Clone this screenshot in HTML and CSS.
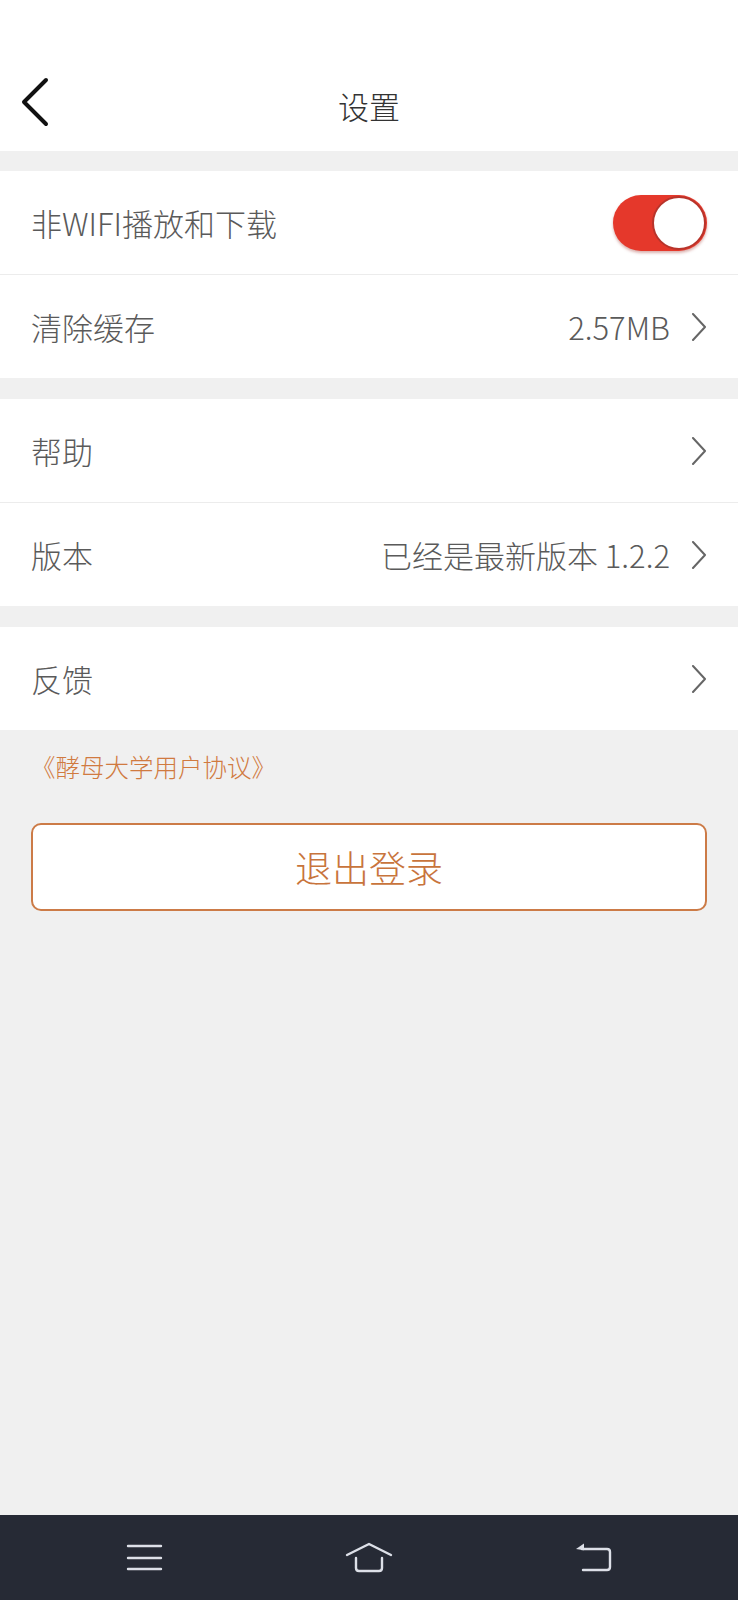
FILE: index.html
```html
<!DOCTYPE html>
<html lang="zh-CN">
<head>
    <meta charset="UTF-8">
    <meta name="viewport" content="width=device-width, initial-scale=1.0">
    <title>设置</title>
    <link rel="stylesheet" href="styles.css">
</head>
<body>
    <div class="page">
        <header class="top-bar">
            <div class="back-btn">
                <svg width="30" height="50" viewBox="0 0 30 50">
                    <path d="M26 3 L4 25 L26 47" fill="none" stroke="#111" stroke-width="4" stroke-linecap="round" stroke-linejoin="round"/>
                </svg>
            </div>
            <h1 class="title">设置</h1>
            <div></div>
        </header>

        <section class="group">
            <div class="row">
                <span class="label">非WIFI播放和下载</span>
                <div class="switch on"><div class="knob"></div></div>
            </div>
            <div class="row">
                <span class="label">清除缓存</span>
                <div class="right">
                    <span class="value">2.57MB</span>
                    <svg class="arrow" width="16" height="28" viewBox="0 0 16 28"><path d="M2 1 L14 14 L2 27" fill="none" stroke="#666" stroke-width="2" stroke-linecap="round" stroke-linejoin="round"/></svg>
                </div>
            </div>
        </section>

        <section class="group">
            <div class="row">
                <span class="label">帮助</span>
                <div class="right">
                    <svg class="arrow" width="16" height="28" viewBox="0 0 16 28"><path d="M2 1 L14 14 L2 27" fill="none" stroke="#666" stroke-width="2" stroke-linecap="round" stroke-linejoin="round"/></svg>
                </div>
            </div>
            <div class="row">
                <span class="label">版本</span>
                <div class="right">
                    <span class="value">已经是最新版本 1.2.2</span>
                    <svg class="arrow" width="16" height="28" viewBox="0 0 16 28"><path d="M2 1 L14 14 L2 27" fill="none" stroke="#666" stroke-width="2" stroke-linecap="round" stroke-linejoin="round"/></svg>
                </div>
            </div>
        </section>

        <section class="group">
            <div class="row">
                <span class="label">反馈</span>
                <div class="right">
                    <svg class="arrow" width="16" height="28" viewBox="0 0 16 28"><path d="M2 1 L14 14 L2 27" fill="none" stroke="#666" stroke-width="2" stroke-linecap="round" stroke-linejoin="round"/></svg>
                </div>
            </div>
        </section>

        <a class="agreement">《酵母大学用户协议》</a>

        <button class="logout">退出登录</button>

        <nav class="sys-bar">
            <svg width="50" height="40" viewBox="0 0 50 40">
                <path d="M9 8 H42 M9 20 H42 M9 31 H42" stroke="#dde0e8" stroke-width="2.4" stroke-linecap="round"/>
            </svg>
            <svg width="50" height="40" viewBox="0 0 50 40">
                <path d="M3 17 L25 6 L47 17" fill="none" stroke="#dde0e8" stroke-width="2.4" stroke-linecap="round" stroke-linejoin="round"/>
                <path d="M12 20 V30 Q12 33 15 33 H35 Q38 33 38 30 V20" fill="none" stroke="#dde0e8" stroke-width="2.4" stroke-linecap="round"/>
            </svg>
            <svg width="50" height="40" viewBox="0 0 50 40">
                <path d="M13 11 H38 Q41 11 41 14 V29 Q41 32 38 32 H14" fill="none" stroke="#dde0e8" stroke-width="2.4" stroke-linecap="round"/>
                <polygon points="7,11 15,5.5 15,12.2" fill="#dde0e8"/>
            </svg>
        </nav>
    </div>
</body>
</html>
```

FILE: styles.css
```css
body {
    margin: 0;
    padding: 0;
    background: #f0f0f0;
    font-family: "Noto Sans CJK SC", "Noto Sans", sans-serif;
    font-weight: 300;
}
.page {
    display: flex;
    flex-direction: column;
    min-height: 100vh;
}
.top-bar {
    background: #fff;
    height: 91px;
    padding-top: 60px;
    display: grid;
    grid-template-columns: 80px 1fr 80px;
    align-items: center;
}
.back-btn {
    padding-left: 20px;
    height: 50px;
    margin-bottom: 8px;
}
.title {
    margin: 0;
    text-align: center;
    font-size: 31px;
    font-weight: 300;
    color: #333;
}
.group {
    background: #fff;
    margin-top: 21px;
}
.group:first-of-type {
    margin-top: 20px;
}
.row {
    height: 103px;
    display: flex;
    justify-content: space-between;
    align-items: center;
    padding: 0 31px;
}
.row + .row {
    border-top: 1px solid #ececec;
}
.label {
    font-size: 31px;
    color: #5a5a5a;
}
.right {
    display: flex;
    align-items: center;
    gap: 21px;
}
.value {
    font-size: 31px;
    color: #5a5a5a;
}
.arrow {
    display: block;
}
.switch {
    width: 94px;
    height: 56px;
    border-radius: 28px;
    background: #e5382b;
    display: flex;
    justify-content: flex-end;
    align-items: center;
    padding: 0 1px;
    box-sizing: border-box;
    box-shadow: 0 2px 3px rgba(150, 30, 20, 0.35);
}
.knob {
    width: 50px;
    height: 50px;
    border-radius: 50%;
    background: #fff;
    border: 2px solid #b8342b;
}
.agreement {
    margin: 20px 0 0 31px;
    font-size: 24.5px;
    line-height: 34px;
    color: #d07a40;
}
.logout {
    margin: 39px 31px 0;
    height: 88px;
    background: #fff;
    border: 2px solid #cc7b47;
    border-radius: 10px;
    font-family: "Noto Sans CJK SC", "Noto Sans", sans-serif;
    font-weight: 300;
    font-size: 37px;
    color: #c8743c;
}
.sys-bar {
    margin-top: auto;
    height: 85px;
    background: #262a35;
    display: flex;
    justify-content: center;
    align-items: center;
    gap: 175px;
}
.sys-bar svg {
    display: block;
}
```
